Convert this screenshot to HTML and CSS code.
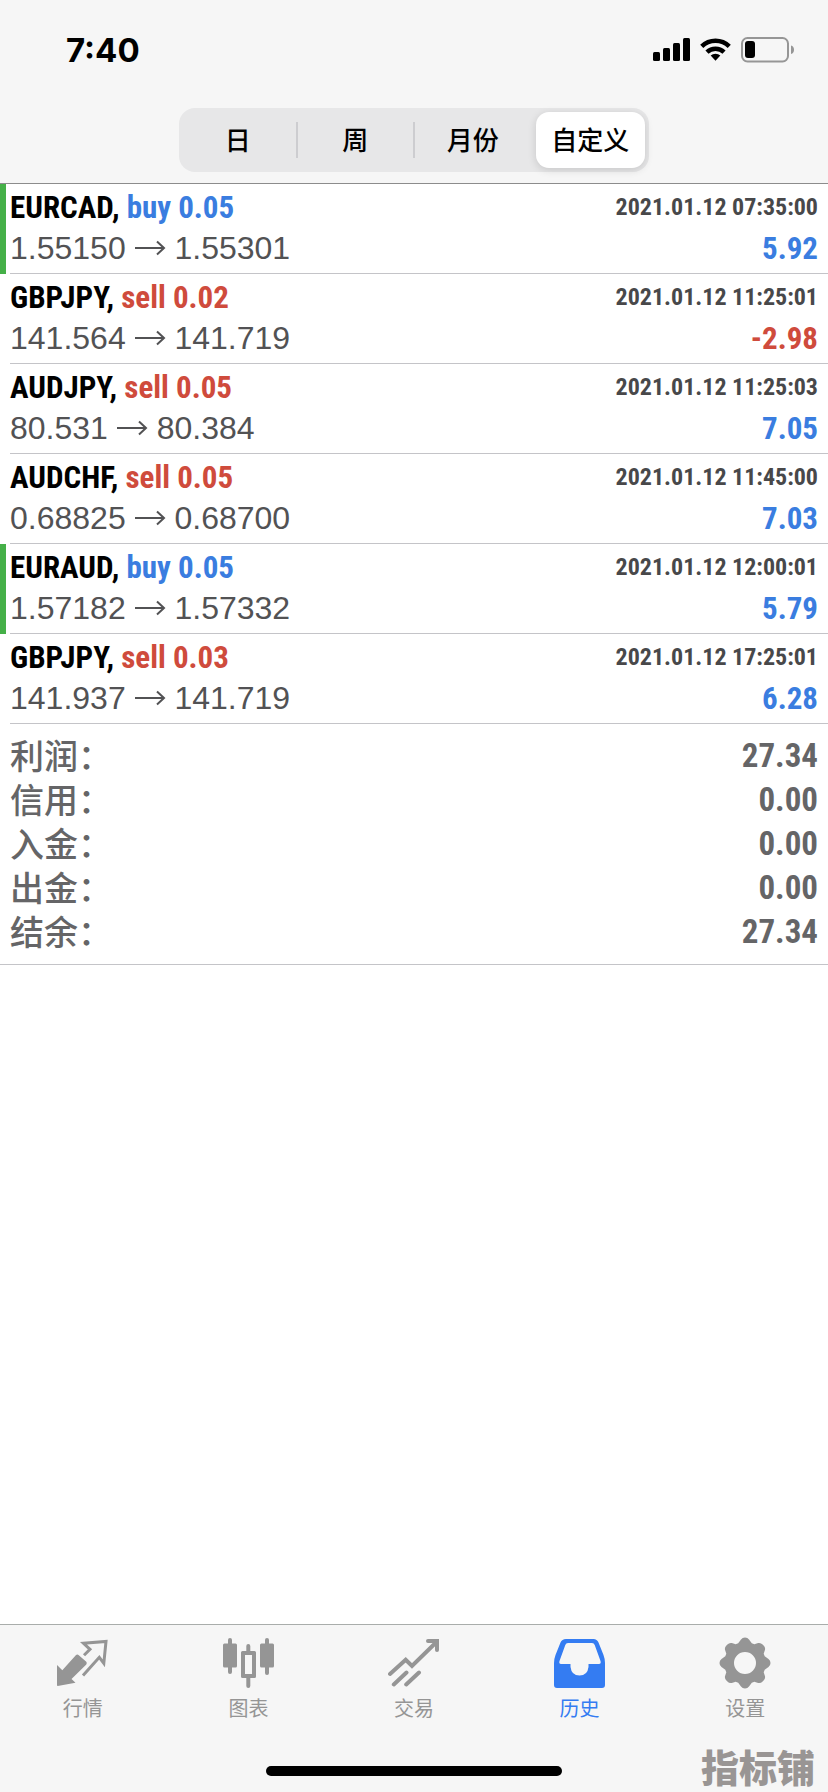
FILE: index.html
```html
<!DOCTYPE html>
<html lang="zh-CN">
<head>
<meta charset="utf-8">
<meta name="viewport" content="width=device-width, initial-scale=1">
<title>历史</title>
<link rel="stylesheet" href="styles.css">
</head>
<body>
<div class="app">
  <header class="header">
    <div class="status">
      <time class="clock">7:40</time>
      <div class="status-icons">
        <svg width="37" height="26" viewBox="0 0 37 26" aria-hidden="true"><rect y="15" width="7" height="9" rx="1.5"/><rect x="10" y="11" width="7" height="13" rx="1.5"/><rect x="20" y="6" width="7" height="18" rx="1.5"/><rect x="30" y="1" width="7" height="23" rx="1.5"/></svg>
        <svg width="31" height="26" viewBox="0 0 32 26" aria-hidden="true"><g fill="none" stroke="#000" stroke-width="4.6"><path d="M1.8 9.2a20.2 20.2 0 0 1 28.4 0"/><path d="M7.2 15.2a12.6 12.6 0 0 1 17.6 0"/></g><path d="M16 24l-5-5.2a7.4 7.4 0 0 1 10 0z"/></svg>
        <svg width="54" height="26" viewBox="0 0 54 26" aria-hidden="true"><rect x="1" y="1" width="46" height="23.5" rx="5.5" fill="none" stroke="#969696" stroke-width="2"/><rect x="4" y="4" width="10" height="17" rx="3"/><path d="M50 8.5c4 1 4 7.500 0 8.500z" fill="#969696"/></svg>
      </div>
    </div>
    <div class="segments" role="group" aria-label="时间范围">
      <button class="segment" type="button">日</button>
      <button class="segment divided" type="button">周</button>
      <button class="segment divided" type="button">月份</button>
      <button class="segment selected" type="button" aria-pressed="true">自定义</button>
    </div>
  </header>

  <main class="history">
    <ul class="deals">
      <li class="deal marked"><div class="deal-body">
        <div class="line"><span class="symbol">EURCAD, <span class="blue">buy 0.05</span></span><time class="date">2021.01.12 07:35:00</time></div>
        <div class="line"><span class="prices">1.55150 <svg class="arrow" viewBox="0 0 31 16" aria-hidden="true"><path d="M0 8h29M22 1.500l7 6.500l-7 6.500"/></svg> 1.55301</span><span class="profit blue">5.92</span></div>
      </div></li>
      <li class="deal"><div class="deal-body">
        <div class="line"><span class="symbol">GBPJPY, <span class="red">sell 0.02</span></span><time class="date">2021.01.12 11:25:01</time></div>
        <div class="line"><span class="prices">141.564 <svg class="arrow" viewBox="0 0 31 16" aria-hidden="true"><path d="M0 8h29M22 1.500l7 6.500l-7 6.500"/></svg> 141.719</span><span class="profit red">-2.98</span></div>
      </div></li>
      <li class="deal"><div class="deal-body">
        <div class="line"><span class="symbol">AUDJPY, <span class="red">sell 0.05</span></span><time class="date">2021.01.12 11:25:03</time></div>
        <div class="line"><span class="prices">80.531 <svg class="arrow" viewBox="0 0 31 16" aria-hidden="true"><path d="M0 8h29M22 1.500l7 6.500l-7 6.500"/></svg> 80.384</span><span class="profit blue">7.05</span></div>
      </div></li>
      <li class="deal"><div class="deal-body">
        <div class="line"><span class="symbol">AUDCHF, <span class="red">sell 0.05</span></span><time class="date">2021.01.12 11:45:00</time></div>
        <div class="line"><span class="prices">0.68825 <svg class="arrow" viewBox="0 0 31 16" aria-hidden="true"><path d="M0 8h29M22 1.500l7 6.500l-7 6.500"/></svg> 0.68700</span><span class="profit blue">7.03</span></div>
      </div></li>
      <li class="deal marked"><div class="deal-body">
        <div class="line"><span class="symbol">EURAUD, <span class="blue">buy 0.05</span></span><time class="date">2021.01.12 12:00:01</time></div>
        <div class="line"><span class="prices">1.57182 <svg class="arrow" viewBox="0 0 31 16" aria-hidden="true"><path d="M0 8h29M22 1.500l7 6.500l-7 6.500"/></svg> 1.57332</span><span class="profit blue">5.79</span></div>
      </div></li>
      <li class="deal"><div class="deal-body">
        <div class="line"><span class="symbol">GBPJPY, <span class="red">sell 0.03</span></span><time class="date">2021.01.12 17:25:01</time></div>
        <div class="line"><span class="prices">141.937 <svg class="arrow" viewBox="0 0 31 16" aria-hidden="true"><path d="M0 8h29M22 1.500l7 6.500l-7 6.500"/></svg> 141.719</span><span class="profit blue">6.28</span></div>
      </div></li>
    </ul>
    <dl class="totals">
      <div class="total"><dt>利润：</dt><dd>27.34</dd></div>
      <div class="total"><dt>信用：</dt><dd>0.00</dd></div>
      <div class="total"><dt>入金：</dt><dd>0.00</dd></div>
      <div class="total"><dt>出金：</dt><dd>0.00</dd></div>
      <div class="total"><dt>结余：</dt><dd>27.34</dd></div>
    </dl>
  </main>

  <footer class="footer">
    <nav class="tabs">
      <a class="tab" href="#quotes">
        <svg class="icon" viewBox="0 0 52 52" aria-hidden="true"><path d="M27 18.300l6-6-6.500-6L49 4.500l-2.200 21.800-4.500-6L26 38.500" fill="none" stroke="currentColor" stroke-width="3"/><path d="M0 28l5.300 5.300 13.500-15q1.500-1.500 3 0l7.500 6.500q1 1.300 0 2.700L14.500 42l4 3.700L.7 49q-.7 0-.7-1z"/></svg>
        <span>行情</span></a>
      <a class="tab" href="#charts">
        <svg class="icon" viewBox="0 0 52 52" aria-hidden="true"><rect x="1" y="6.500" width="14" height="24" rx="1.500"/><rect x="6" y="1" width="4" height="36" rx="2"/><path fill-rule="evenodd" d="M20.500 14H32.500q1.500 0 1.500 1.500v24q0 1.500-1.500 1.500h-12q-1.500 0-1.500-1.500v-24q0-1.500 1.500-1.500zM23 18v19h7V18z"/><path d="M24.300 15V9a2 2 0 0 1 4 0v6zM24.300 40v9a2 2 0 0 0 4 0v-9z"/><rect x="38" y="6.500" width="14" height="24" rx="1.500"/><rect x="43" y="1" width="4" height="37" rx="2"/></svg>
        <span>图表</span></a>
      <a class="tab" href="#trade">
        <svg class="icon" viewBox="0 0 52 52" aria-hidden="true"><g fill="none" stroke="currentColor" stroke-width="4" stroke-linecap="round"><path d="M2 37L17.700 22.800l6.300 6.200L48.500 5M5.800 47.500L18.500 35.500M18.200 47.500L31 35.500"/><path d="M40 4h9v9"/></g></svg>
        <span>交易</span></a>
      <a class="tab active" href="#history" aria-current="page">
        <svg class="icon" viewBox="0 0 52 52" aria-hidden="true"><path fill-rule="evenodd" d="M12 2H39.500Q43 2 44.500 5.500L49.500 18q1.500 4 1.500 8V48q0 3-3 3H3q-3 0-3-3V26q0-4 1.500-8L6.500 5.500Q8 2 12 2zM14 6q-2 0-2.700 2L5.500 24q-.8 3 1.500 3h9.500v3q1 8.500 9 8.500t9-8.500v-3H45q2.300 0 1.500-3L40.700 8Q40 6 38 6z"/></svg>
        <span>历史</span></a>
      <a class="tab" href="#settings">
        <svg class="icon" viewBox="0 0 52 52" aria-hidden="true"><path fill-rule="evenodd" d="M22 2.500Q23.400.5 26 .5t4 2L32.800 6.300L35.300 7.300L39.200 6Q41.800 5.500 43.600 7.400L44.600 8.400Q46.500 10.200 46 12.800L44.700 16.700L45.700 19.200L49.500 22Q51.500 23.400 51.500 26t-2 4L45.700 32.800L44.700 35.300L46 39.200Q46.500 41.800 44.600 43.600L43.600 44.600Q41.800 46.500 39.200 46L35.300 44.700L32.800 45.700L30 49.500Q28.600 51.500 26 51.500t-4-2L19.200 45.700L16.700 44.700L12.800 46Q10.200 46.500 8.400 44.600L7.400 43.600Q5.500 41.800 6 39.200L7.300 35.300L6.300 32.800L2.500 30Q.5 28.600 .5 26t2-4L6.300 19.200L7.300 16.700L6 12.800Q5.500 10.200 7.400 8.400L8.400 7.400Q10.200 5.500 12.800 6L16.700 7.300L19.200 6.300zM26 15a11 11 0 1 0 0 22a11 11 0 1 0 0-22z"/></svg>
        <span>设置</span></a>
    </nav>
    <div class="home-indicator"></div>
    <span class="watermark">指标铺</span>
  </footer>
</div>
</body>
</html>
```
FILE: styles.css
```css
* { box-sizing: border-box; }

body {
  margin: 0;
  background: #fff;
  color: #000;
  font-family: "Liberation Sans", "Noto Sans CJK SC", sans-serif;
}

.app {
  min-height: 100vh;
  display: flex;
  flex-direction: column;
}

.header {
  background: #f6f6f6;
  border-bottom: 1px solid #8c8c8c;
  padding-bottom: 11px;
}

.status {
  height: 108px;
  padding: 30px 33px 0 66px;
  display: flex;
  justify-content: space-between;
  align-items: flex-start;
}

.clock {
  font: 700 33px/40px Inter, sans-serif;
}

.status-icons {
  display: flex;
  gap: 10px;
  padding-top: 7px;
}

.segments {
  width: 57%;
  max-width: 470px;
  height: 64px;
  margin: 0 auto;
  padding: 4px 0;
  display: grid;
  grid-template-columns: repeat(4, 1fr);
  background: #e7e7e8;
  border-radius: 16px;
}

.segment {
  position: relative;
  border: 0;
  padding: 0 0 2px;
  background: none;
  color: #000;
  font: 500 26px/36px "Noto Sans CJK SC", sans-serif;
}

.divided::before {
  content: "";
  position: absolute;
  left: -1px;
  top: 10px;
  bottom: 10px;
  width: 2px;
  background: #cdcdd0;
}

.selected {
  margin: 0 4px;
  background: #fff;
  border-radius: 13px;
  box-shadow: 0 2px 8px rgba(0, 0, 0, 0.14);
}

.history { flex: 1; }

.deals {
  margin: 0;
  padding: 0;
  list-style: none;
}

.deal { padding-left: 10px; }

.marked {
  padding-left: 4px;
  border-left: 6px solid #45b048;
}

.deal-body {
  height: 90px;
  padding: 3px 10px 0 0;
  border-bottom: 1px solid #c4c4c8;
}

.line {
  display: flex;
  justify-content: space-between;
  align-items: center;
  height: 41px;
  line-height: 41px;
  white-space: nowrap;
}

.symbol, .date, .profit, .total dd {
  font-family: "Roboto Condensed", "Liberation Sans", sans-serif;
  font-weight: 700;
}

.symbol, .profit { font-size: 31px; }

.date {
  font-size: 24px;
  color: #48484a;
}

.prices {
  font-size: 32px;
  color: #525254;
}

.arrow {
  width: 31px;
  height: 16px;
  vertical-align: 3px;
  fill: none;
  stroke: currentColor;
  stroke-width: 2;
}

.blue { color: #3a7de0; }
.red { color: #cf4b3c; }

.totals {
  margin: 0;
  padding: 9px 10px 11px;
  border-bottom: 1px solid #c4c4c8;
}

.total {
  height: 44px;
  display: flex;
  justify-content: space-between;
  align-items: center;
  color: #656567;
}

.total dt {
  font: 500 34px/44px "Noto Sans CJK SC", sans-serif;
}

.total dd {
  margin: 0;
  font-size: 33px;
}

.footer {
  position: relative;
  height: 168px;
  background: #f6f6f6;
  border-top: 1px solid #a9adab;
}

.tabs {
  display: grid;
  grid-template-columns: repeat(5, 1fr);
  padding-top: 12px;
}

.tab {
  display: flex;
  flex-direction: column;
  align-items: center;
  gap: 4px;
  color: #959595;
  font: 400 20px/30px "Noto Sans CJK SC", sans-serif;
  text-decoration: none;
}

.active { color: #347cf2; }

.icon {
  width: 52px;
  height: 52px;
  fill: currentColor;
}

.home-indicator {
  width: 296px;
  height: 10px;
  margin: 43px auto 0;
  border-radius: 5px;
  background: #000;
}

.watermark {
  position: absolute;
  right: 13px;
  bottom: 2px;
  color: #999594;
  font: 900 38px/48px "Noto Sans CJK SC", sans-serif;
}
```
